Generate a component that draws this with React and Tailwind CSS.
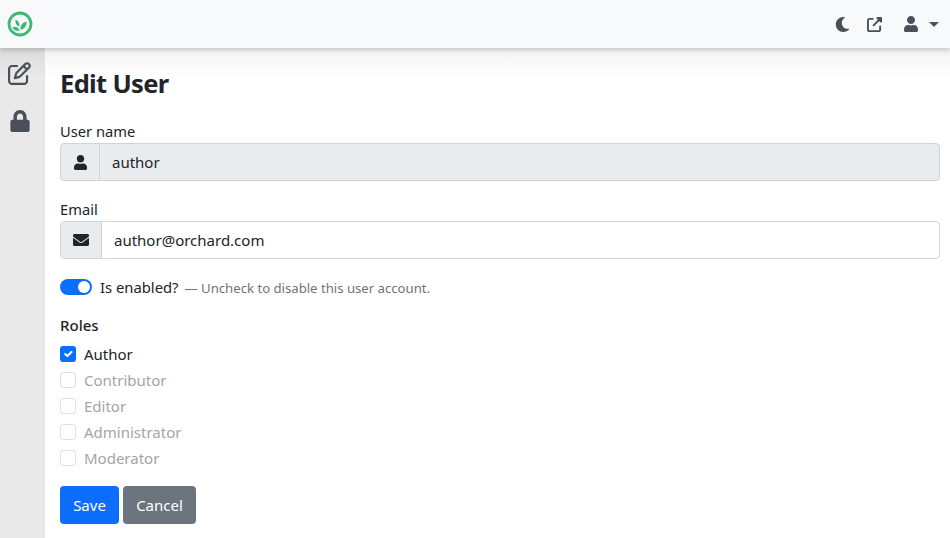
import React from 'react';
import { FaLock, FaUser, FaEnvelope, FaMoon } from 'react-icons/fa';
import { FaRegPenToSquare, FaUpRightFromSquare } from 'react-icons/fa6';

const roles = ['Contributor', 'Editor', 'Administrator', 'Moderator'];

function Logo() {
  return (
    <svg width="26" height="26" viewBox="0 0 26 26">
      <circle cx="13" cy="13" r="11" fill="none" stroke="#3fb873" strokeWidth="2.8" />
      <path d="M12.6 19.600c-3.400.8-6-.6-7.200-3.400 3.400-1.400 6 0 7.200 3.400z" fill="#3fb873" />
      <path d="M13.400 18.800c3.800-.4 6.200-3.400 6.400-8.200-4.200.8-6.600 3.800-6.400 8.200z" fill="#3fb873" />
      <path d="M12.200 15.400c-2.800-1-4.200-3.600-3.800-7 3 1.200 4.600 3.800 3.800 7z" fill="#3fb873" />
    </svg>
  );
}

export default function App() {
  return (
    <div className="h-[538px] w-[950px] overflow-hidden bg-white font-['Noto_Sans',sans-serif] text-[16px] text-[#212529]">
      {/* Top navbar */}
      <div className="relative z-10 flex h-12 items-center justify-between bg-[#f8f9fa] pl-[7px] pr-[11px] shadow-[0_2px_5px_rgba(0,0,0,0.2)]">
        <Logo />
        <div className="flex items-center text-[#495057]">
          <FaMoon className="h-[15px] w-[15px]" />
          <FaUpRightFromSquare className="ml-[17px] h-[15px] w-[15px]" />
          <FaUser className="ml-[21px] h-4 w-4" />
          <div className="ml-[10px] h-0 w-0 border-x-[5px] border-t-[5px] border-x-transparent border-t-[#495057]" />
        </div>
      </div>

      <div className="flex h-[490px]">
        {/* Sidebar */}
        <div className="flex w-[45px] flex-col items-center border-r border-[#dee2e6] bg-[linear-gradient(#dcdcdc,#e9e9e9_30px)] pt-[14px] pr-[5px] text-[#495057]">
          <FaRegPenToSquare className="h-[23px] w-[23px]" />
          <FaLock className="mt-[25px] h-[22px] w-[22px]" />
        </div>

        {/* Form */}
        <div className="flex-1 bg-[linear-gradient(#f3f3f3,#ffffff_30px)] pl-[15px] pr-[10px]">
          <h1 className="pt-[16px] pb-[1px] text-[25.5px] leading-[38px] font-bold tracking-[-0.65px]">Edit User</h1>

          <label className="mt-[16px] block text-[14.7px] leading-6">User name</label>
          <div className="flex h-[38px] rounded border border-[#ced4da] bg-[#e9ecef]">
            <div className="flex w-[39px] items-center justify-center border-r border-[#ced4da]">
              <FaUser className="h-[15px] w-[15px]" />
            </div>
            <div className="flex items-center pl-3 text-[15px]">author</div>
          </div>

          <label className="mt-4 block text-[14.7px] leading-6">Email</label>
          <div className="flex h-[38px] rounded border border-[#ced4da]">
            <div className="flex w-[41px] items-center justify-center rounded-l border-r border-[#ced4da] bg-[#e9ecef]">
              <FaEnvelope className="h-4 w-4" />
            </div>
            <div className="flex items-center pl-3 text-[15px]">author@orchard.com</div>
          </div>

          <div className="mt-[16px] flex h-6 items-center">
            <div className="flex h-4 w-8 items-center justify-end rounded-full bg-[#0d6efd] pr-[2px]">
              <div className="h-3 w-3 rounded-full bg-white" />
            </div>
            <span className="ml-2 text-[14.8px]">Is enabled?</span>
            <span className="ml-[6px] mt-[4px] text-[13.15px] text-[#6c757d]">— Uncheck to disable this user account.</span>
          </div>

          <div className="mt-[14px] text-[15px] leading-6 font-medium">Roles</div>
          <div className="mt-[4px] flex h-[26px] items-center">
            <div className="flex h-4 w-4 items-center justify-center rounded-[3px] bg-[#0d6efd]">
              <svg width="14" height="14" viewBox="0 0 20 20">
                <path fill="none" stroke="#fff" strokeLinecap="round" strokeLinejoin="round" strokeWidth="3" d="M6 10l3 3l6-6" />
              </svg>
            </div>
            <span className="ml-2 text-[15px]">Author</span>
          </div>
          {roles.map((role) => (
            <div key={role} className="flex h-[26px] items-center">
              <div className="h-4 w-4 rounded-[3px] border border-[#dfe2e5] bg-white" />
              <span className="ml-2 text-[15px] text-[#a3a5a7]">{role}</span>
            </div>
          ))}

          <div className="mt-[15px] flex gap-1">
            <button className="h-[38px] w-[59px] rounded bg-[#0d6efd] text-[15px] text-white">Save</button>
            <button className="h-[38px] w-[73px] rounded bg-[#6c757d] text-[15px] text-white">Cancel</button>
          </div>
        </div>
      </div>
    </div>
  );
}
